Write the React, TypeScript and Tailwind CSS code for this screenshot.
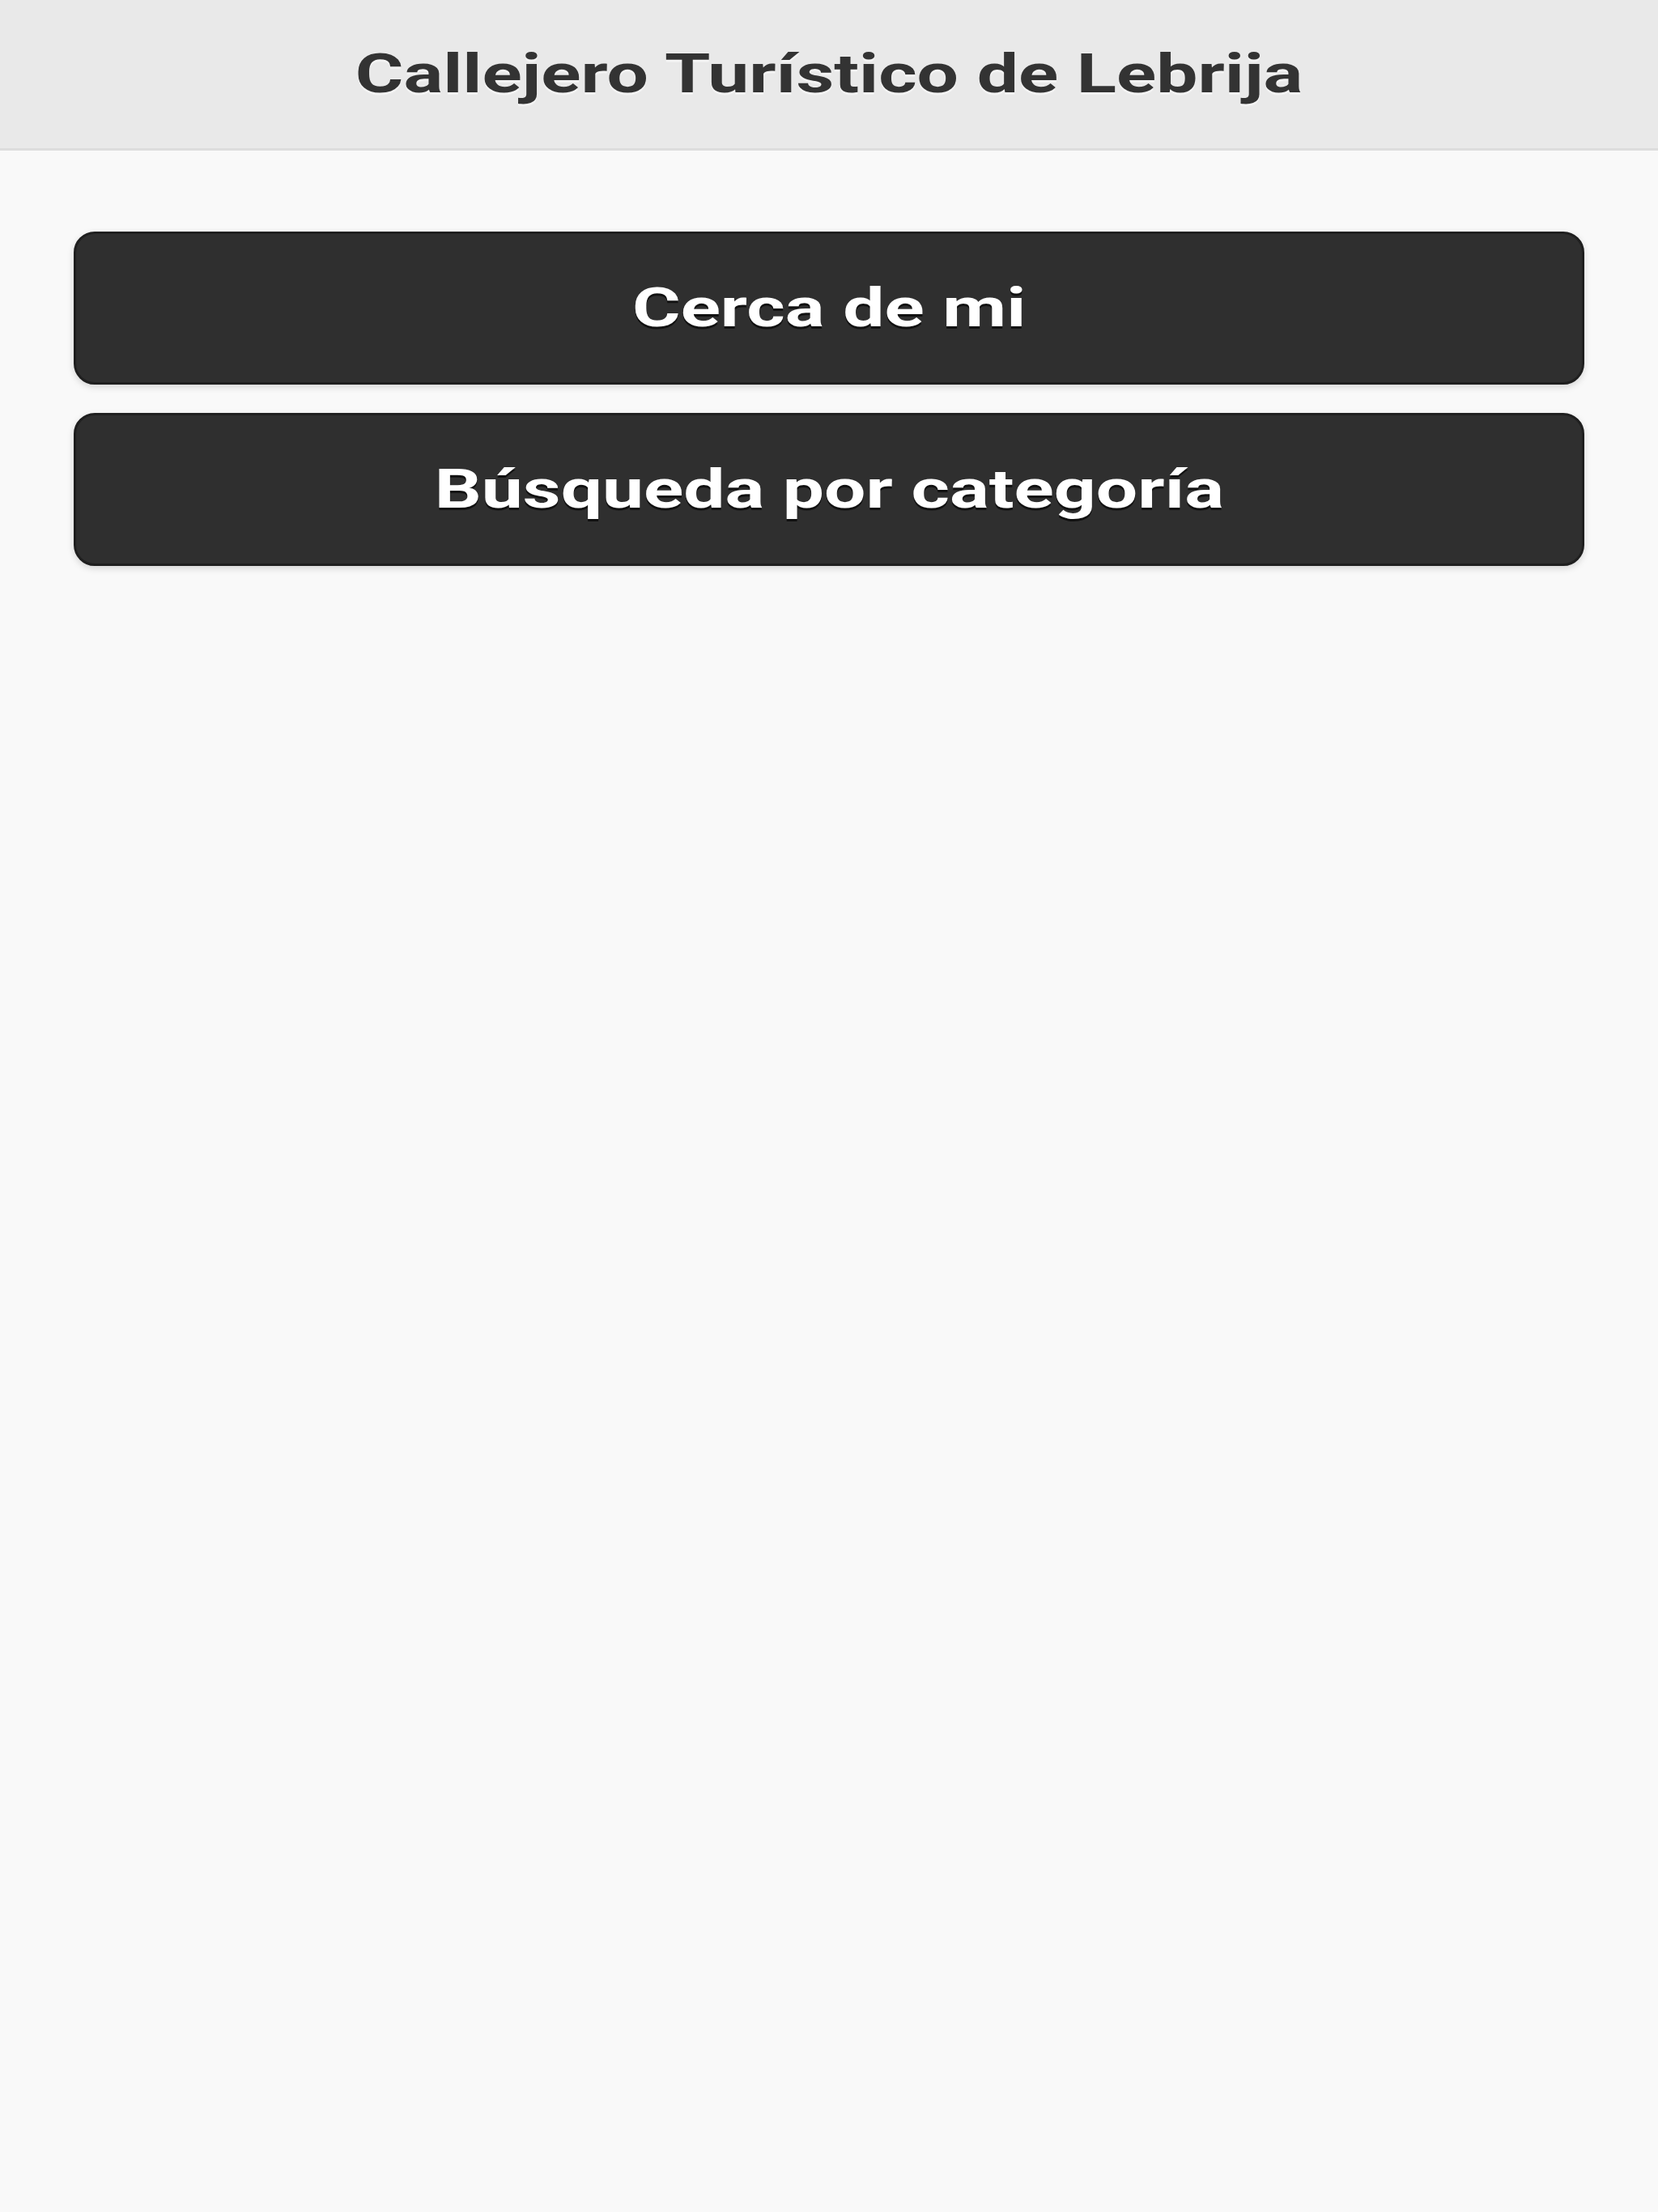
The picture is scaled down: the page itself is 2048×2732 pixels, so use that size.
export default function App() {
  const items = ["Cerca de mi", "Búsqueda por categoría"];

  return (
    <div className="min-h-[2732px] bg-[#f9f9f9] font-['Roboto','Liberation_Sans',sans-serif]">
      {/* Cabecera */}
      <header className="flex h-[186px] items-center justify-center border-b-[3px] border-[#dddddd] bg-[#e9e9e9]">
        <h1 className="inline-block scale-x-[1.38] text-[66px] font-bold leading-none text-[#333333] [text-shadow:0_3px_0_#f3f3f3]">
          Callejero Turístico de Lebrija
        </h1>
      </header>

      {/* Menú principal */}
      <main className="flex flex-col gap-[35px] px-[91px] pt-[100px]">
        {items.map((label) => (
          <button
            key={label}
            type="button"
            className="flex h-[189px] w-full items-center justify-center rounded-[26px] border-[3px] border-[#1f1f1f] bg-[#2f2f2f] text-white shadow-[0_3px_9px_rgba(0,0,0,0.15)]"
          >
            <span className="inline-block scale-x-[1.38] text-[66px] font-bold leading-none [text-shadow:0_3px_0_#111111]">
              {label}
            </span>
          </button>
        ))}
      </main>
    </div>
  );
}
